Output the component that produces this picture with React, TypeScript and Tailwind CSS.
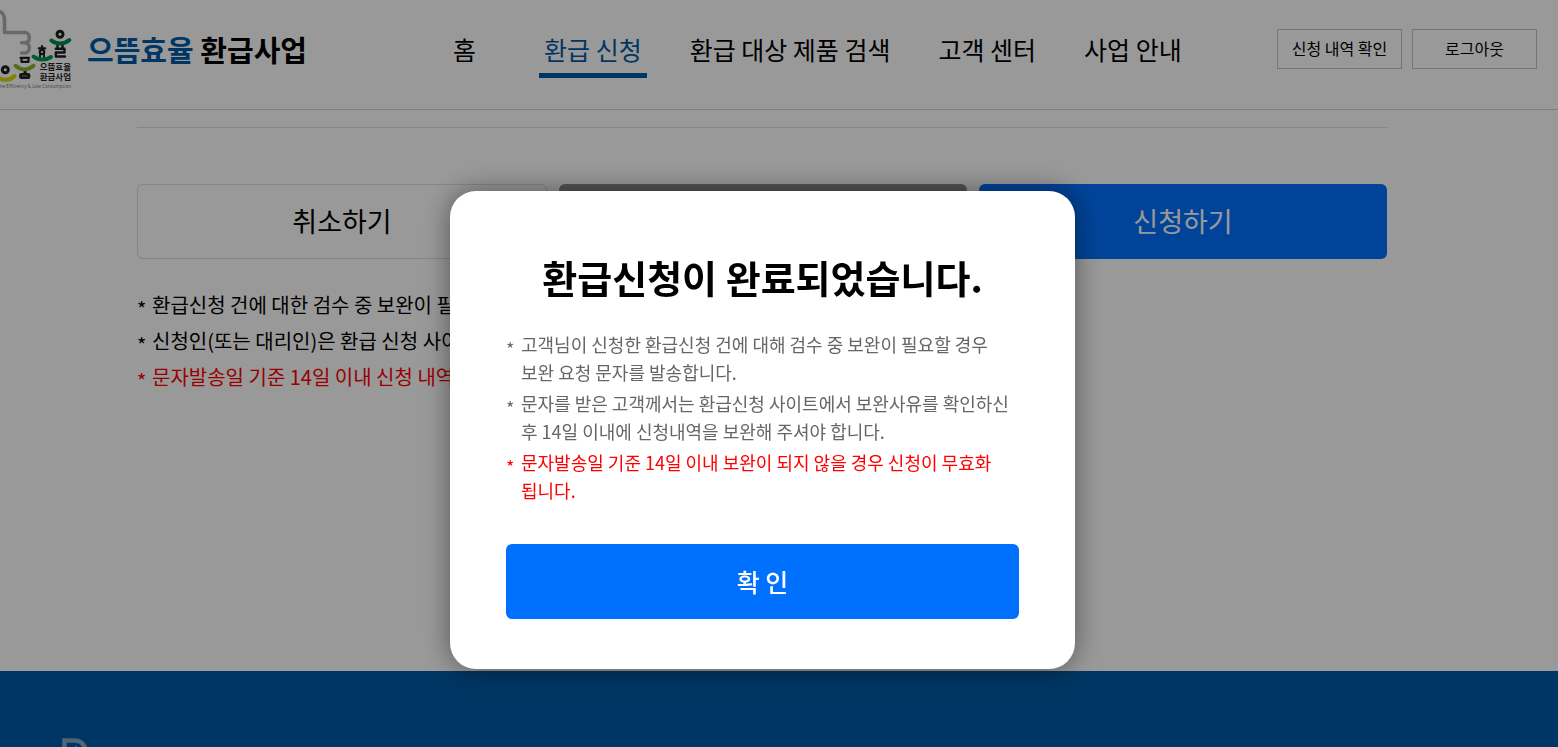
import React, { useState } from "react"

const navItems = [
  { label: "홈", href: "#home" },
  { label: "환급 신청", href: "#apply", active: true },
  { label: "환급 대상 제품 검색", href: "#products" },
  { label: "고객 센터", href: "#support" },
  { label: "사업 안내", href: "#about" },
]

const pageNotices = [
  { text: "환급신청 건에 대한 검수 중 보완이 필요할 경우 보완 요청 문자를 발송합니다." },
  { text: "신청인(또는 대리인)은 환급 신청 사이트에서 보완사유를 확인해 주셔야 합니다." },
  { text: "문자발송일 기준 14일 이내 신청 내역을 보완하지 않을 경우 신청이 무효화됩니다.", warn: true },
]

const modalNotices = [
  { text: "고객님이 신청한 환급신청 건에 대해 검수 중 보완이 필요할 경우 보완 요청 문자를 발송합니다." },
  { text: "문자를 받은 고객께서는 환급신청 사이트에서 보완사유를 확인하신 후 14일 이내에 신청내역을 보완해 주셔야 합니다." },
  { text: "문자발송일 기준 14일 이내 보완이 되지 않을 경우 신청이 무효화 됩니다.", warn: true },
]

const Logo = () => (
  <svg className="w-[72px] h-[98px] shrink-0" viewBox="0 0 72 98" fill="none" strokeLinecap="round" strokeLinejoin="round">
    {/* thumb outline */}
    <path
      d="M-3 11C2 11 4.500 15 4.500 20V32.500H25C30.500 32.500 31 42.700 25 42.700H21.500M25 42.700C31 42.700 30.500 53 25 53H21.500"
      stroke="#b0b0b0"
      strokeWidth="3.600"
    />
    <g stroke="#1f1f1f" strokeWidth="3">
      <circle cx="5.300" cy="69.700" r="3" />
      <path d="M20.500 57.800H29M21.500 61.800H28.500M21.500 57.800V61.800M28.500 57.800V61.800" strokeWidth="2.200" />
      <rect x="20.500" y="74.300" width="8.500" height="3.400" rx="1" strokeWidth="2.800" />
      <path d="M25 70V73" />
      <path d="M42 46V48M38.800 48.300H45.200" strokeWidth="2.200" />
      <circle cx="42" cy="52" r="2.200" strokeWidth="2.200" />
      <path d="M40 55V57M44 55V57" strokeWidth="2" />
      <circle cx="60" cy="34.200" r="3" />
      <path d="M57.500 44V48M62.500 44V48M55.800 48.800H64.500V52.500H55.800V56.500H65" strokeWidth="2.400" />
    </g>
    <path d="M-6 73.500C0 81.500 9 81.500 14.500 76" stroke="#d6dc00" strokeWidth="4" />
    <path d="M15.500 65.800C21 70.500 28 70.500 33.500 65.800" stroke="#84b82c" strokeWidth="4" />
    <path d="M33.500 56.500C38 60.500 46 60.500 51 57" stroke="#009c4f" strokeWidth="4" />
    <path d="M51.500 40.500C56 44.500 64 44.500 69.300 40" stroke="#008a4f" strokeWidth="4" />
    <g fill="#1f1f1f" fontFamily="'Noto Sans CJK KR', sans-serif" fontWeight="700" fontSize="8.500">
      <text x="71" y="70" textAnchor="end">으뜸효율</text>
      <text x="71" y="80" textAnchor="end">환급사업</text>
    </g>
    <text x="71" y="87.500" textAnchor="end" fill="#777" fontFamily="'Open Sans', sans-serif" fontSize="4.600">
      me Efficiency &amp; Low Consumption
    </text>
  </svg>
)

const NoticeItem = ({ text, warn }: any) => (
  <li className={`flex ${warn ? "text-[#ff0000]" : ""}`}>
    <span className="w-[15px] shrink-0 mt-1 -mb-1">*</span>
    <span>{text}</span>
  </li>
)

const Header = () => (
  <header className="flex items-start h-[110px] border-b border-[#d4d0d4] pr-[21px] whitespace-nowrap">
    <a href="#home" className="flex items-start shrink-0" aria-label="으뜸효율 환급사업">
      <Logo />
      <span className="ml-[15px] pt-[27px] text-[29px] leading-[45px] font-bold">
        <span className="text-[#005aa5]">으뜸효율</span> 환급사업
      </span>
    </a>
    <nav className="flex gap-[38px] pt-[27px] ml-[141px]">
      {navItems.map(({ label, href, active }) => (
        <a
          key={href}
          href={href}
          className={`px-[5px] pb-px text-[25px] leading-[45px] border-b-[5px] first:mr-5 ${
            active ? "text-[#005aa5] border-[#005aa5]" : "border-transparent"
          }`}
        >
          {label}
        </a>
      ))}
    </nav>
    <div className="flex gap-[10px] pt-[29px] ml-auto">
      <button className="w-[125px] h-10 pb-0.5 border border-[#c4c4c4] text-base">신청 내역 확인</button>
      <button className="w-[125px] h-10 pb-0.5 border border-[#c4c4c4] text-base">로그아웃</button>
    </div>
  </header>
)

const CompleteModal = ({ onClose }: any) => (
  <div className="fixed inset-0 flex justify-center items-start pt-[191px] pr-[33px] bg-black/40">
    <div
      role="dialog"
      aria-modal="true"
      aria-labelledby="modal-title"
      className="w-[625px] px-14 pt-[58px] pb-[50px] rounded-[26px] bg-white shadow-[0_0_28px_rgba(0,0,0,0.45)]"
    >
      <h2 id="modal-title" className="text-[38px] leading-[56px] font-bold text-center">
        환급신청이 완료되었습니다.
      </h2>
      <ul className="flex flex-col gap-[3px] mt-[25px] text-lg leading-7 text-[#666]">
        {modalNotices.map((notice) => (
          <NoticeItem key={notice.text} {...notice} />
        ))}
      </ul>
      <button
        className="w-full h-[75px] mt-10 rounded-md bg-[#0071ff] text-white text-[25px] font-medium"
        onClick={onClose}
      >
        확 인
      </button>
    </div>
  </div>
)

const App = () => {
  const [isOpen, setIsOpen] = useState(true)

  return (
    <div className="h-screen overflow-hidden bg-white text-black break-keep font-['Noto_Sans_CJK_KR',sans-serif]">
      <Header />
      <main className="pt-[17px] pr-[34px] pb-[276px]">
        <div className="max-w-[1250px] mx-auto">
          <hr className="border-[#dedede]" />
          <div className="flex gap-3 mt-14 text-[27px]">
            <button className="flex-1 h-[75px] rounded-md border border-[#dedede]">취소하기</button>
            <button className="flex-1 h-[75px] rounded-md bg-[#8c8c8c] text-white">임시저장</button>
            <button className="flex-1 h-[75px] rounded-md bg-[#0071ff] text-white" onClick={() => setIsOpen(true)}>
              신청하기
            </button>
          </div>
          <ul className="mt-7 text-xl leading-[36px]">
            {pageNotices.map((notice) => (
              <NoticeItem key={notice.text} {...notice} />
            ))}
          </ul>
        </div>
      </main>
      <footer className="px-[62px] pt-[66px] bg-[#005aa5]">
        <svg className="w-[30px] h-[34px]" viewBox="0 0 30 34" fill="none" stroke="#86a8c8">
          <path d="M2.500 34V3.500H12C18 3.500 22 7 23.500 12" strokeWidth="4.500" />
          <path d="M13 10.500L15 9.500" strokeWidth="1.500" />
        </svg>
      </footer>
      {isOpen && <CompleteModal onClose={() => setIsOpen(false)} />}
    </div>
  )
}

export default App
